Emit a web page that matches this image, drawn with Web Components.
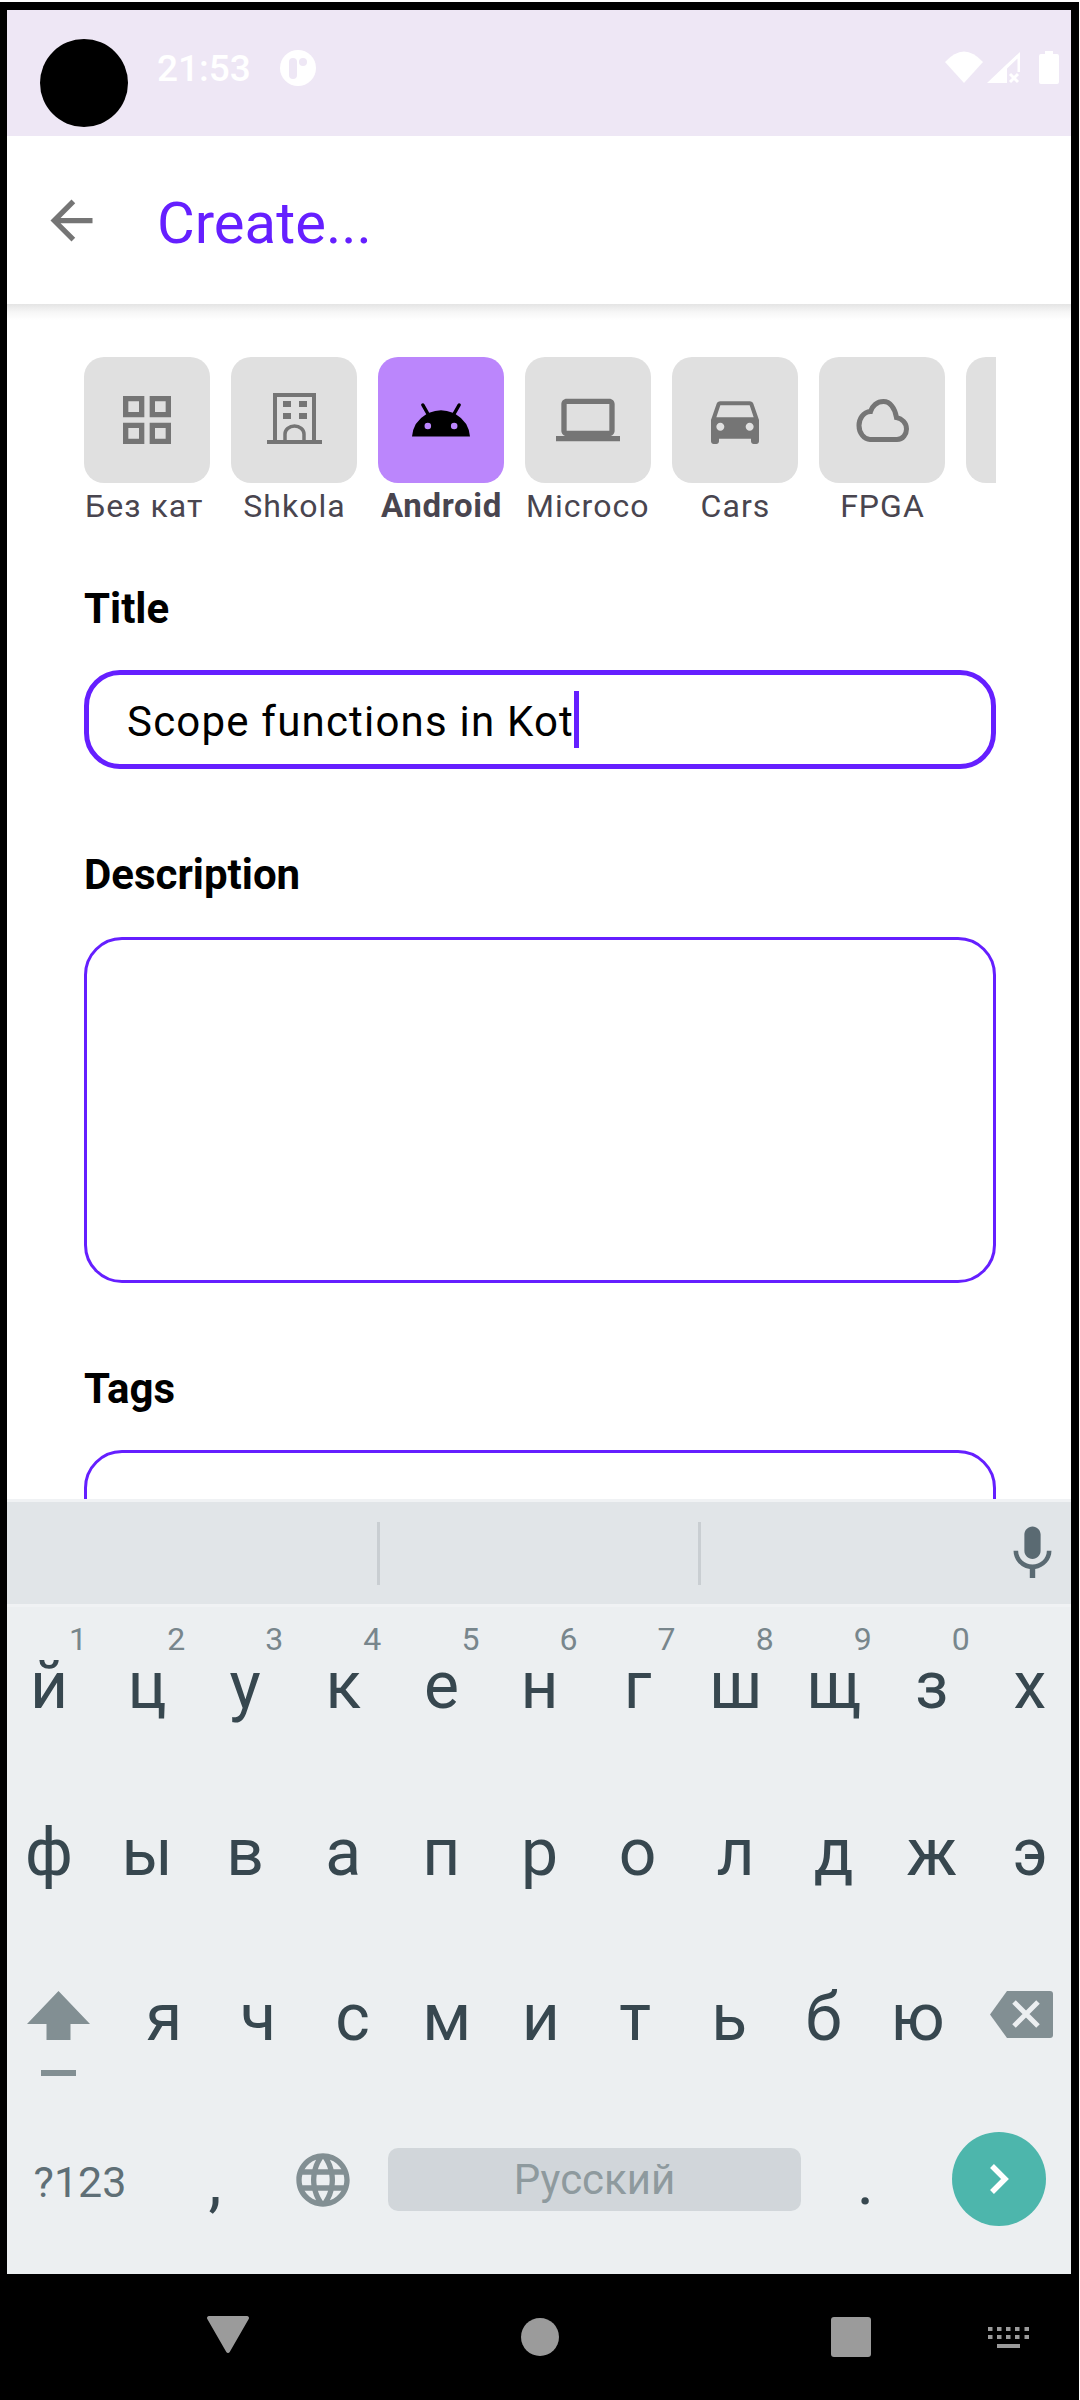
<!DOCTYPE html>
<html>
<head>
<meta charset="utf-8">
<title>Create</title>
<style>
    html,body{margin:0;padding:0;background:#fff;}
    body{width:1080px;height:2400px;overflow:hidden;font-family:Roboto,"Liberation Sans",sans-serif;}
    svg{display:block;}
</style>
</head>
<body>

<phone-frame>
    <status-bar time="21:53"></status-bar>
    <app-toolbar title="Create..."></app-toolbar>

    <create-form>
        <category-list>
            <category-chip label="Без кат" clipped>
                <svg width="64" height="64" viewBox="0 0 24 24" fill="#757575"><path d="M3 3v8h8V3H3zm6 6H5V5h4v4zm-6 4v8h8v-8H3zm6 6H5v-4h4v4zm4-16v8h8V3h-8zm6 6h-4V5h4v4zm-6 4v8h8v-8h-8zm6 6h-4v-4h4v4z"/></svg>
            </category-chip>
            <category-chip label="Shkola">
                <svg width="66" height="66" viewBox="0 0 66 66" fill="#757575">
                    <rect x="6" y="53" width="55" height="4"/>
                    <path d="M14 54V8H53V54" fill="none" stroke="#757575" stroke-width="4"/>
                    <rect x="22" y="14" width="8" height="6"/><rect x="38" y="14" width="8" height="6"/>
                    <rect x="22" y="26" width="8" height="6"/><rect x="38" y="26" width="8" height="6"/>
                    <path d="M24 54v-7a9.5 8 0 0 1 19 0v7" fill="none" stroke="#757575" stroke-width="3.5"/>
                </svg>
            </category-chip>
            <category-chip label="Android" selected>
                <svg width="58" height="34" viewBox="1 7.4 22 12.6" fill="#000"><path fill-rule="evenodd" d="M17.6 11.48 19.44 8.3a.63.63 0 0 0-1.09-.63l-1.88 3.24a11.43 11.43 0 0 0-8.94 0L5.65 7.67a.63.63 0 0 0-1.09.63L6.4 11.48A10.81 10.81 0 0 0 1 20h22a10.81 10.81 0 0 0-5.4-8.52zM7 17.25A1.25 1.25 0 1 1 8.25 16 1.25 1.25 0 0 1 7 17.25zm10 0A1.25 1.25 0 1 1 18.25 16 1.25 1.25 0 0 1 17 17.25z"/></svg>
            </category-chip>
            <category-chip label="Microco" clipped>
                <svg width="64" height="64" viewBox="0 0 24 24" fill="#757575"><path d="M20 18c1.1 0 1.99-.9 1.99-2L22 6c0-1.1-.9-2-2-2H4c-1.1 0-2 .9-2 2v10c0 1.1.9 2 2 2H0v2h24v-2h-4zM4 6h16v10H4V6z"/></svg>
            </category-chip>
            <category-chip label="Cars">
                <svg width="64" height="64" viewBox="0 0 24 24" fill="#757575"><path d="M18.92 6.01C18.72 5.42 18.16 5 17.5 5h-11c-.66 0-1.21.42-1.42 1.01L3 12v8c0 .55.45 1 1 1h1c.55 0 1-.45 1-1v-1h12v1c0 .55.45 1 1 1h1c.55 0 1-.45 1-1v-8l-2.08-5.99zM6.5 16c-.83 0-1.5-.67-1.5-1.5S5.67 13 6.5 13s1.5.67 1.5 1.5S7.33 16 6.5 16zm11 0c-.83 0-1.5-.67-1.5-1.5s.67-1.5 1.5-1.5 1.5.67 1.5 1.5-.67 1.5-1.5 1.5zM5 11l1.5-4.5h11L19 11H5z"/></svg>
            </category-chip>
            <category-chip label="FPGA">
                <svg width="64" height="64" viewBox="0 0 64 64" fill="none" stroke="#757575" stroke-width="5"><path d="M20 51.5H47C53 51.5 56.5 46 56.5 41C56.5 35 52 30.5 46.5 29.5C45 20 40 13.5 33.5 13.5C27 13.5 22 18 20.5 23.5C13 24 9 31 9 37.5C9 45 14 51.5 20 51.5Z"/></svg>
            </category-chip>
            <category-chip label=""></category-chip>
        </category-list>

        <form-field label="Title" gap="36" focused>Scope functions in Kot</form-field>
        <form-field label="Description" gap="37" box="346"></form-field>
        <form-field label="Tags" gap="36" box="120"></form-field>
    </create-form>

    <ime-keyboard>
        <kb-row style="--pad:41px">
            <kb-key hint="1">й</kb-key><kb-key hint="2">ц</kb-key><kb-key hint="3">у</kb-key><kb-key hint="4">к</kb-key><kb-key hint="5">е</kb-key><kb-key hint="6">н</kb-key><kb-key hint="7">г</kb-key><kb-key hint="8">ш</kb-key><kb-key hint="9">щ</kb-key><kb-key hint="0">з</kb-key><kb-key>х</kb-key>
        </kb-row>
        <kb-row style="--pad:41px">
            <kb-key>ф</kb-key><kb-key>ы</kb-key><kb-key>в</kb-key><kb-key>а</kb-key><kb-key>п</kb-key><kb-key>р</kb-key><kb-key>о</kb-key><kb-key>л</kb-key><kb-key>д</kb-key><kb-key>ж</kb-key><kb-key>э</kb-key>
        </kb-row>
        <kb-row style="--pad:39px;--cols:117px repeat(9,94.2px) 1fr">
            <kb-key type="icon">
                <svg width="63" height="85" viewBox="0 0 63 85" fill="#828F93">
                    <path d="M31.5 0 63 33H43.5V49H19.5V33H0Z"/>
                    <rect x="14" y="79" width="35" height="6"/>
                </svg>
            </kb-key>
            <kb-key>я</kb-key><kb-key>ч</kb-key><kb-key>с</kb-key><kb-key>м</kb-key><kb-key>и</kb-key><kb-key>т</kb-key><kb-key>ь</kb-key><kb-key>б</kb-key><kb-key>ю</kb-key>
            <kb-key type="icon">
                <svg width="63" height="47" viewBox="0 0 63 47">
                    <path d="M17 0H60a3 3 0 0 1 3 3V44a3 3 0 0 1-3 3H17L0 23.5Z" fill="#828F93"/>
                    <path d="M24 11 48 35M48 11 24 35" stroke="#ECEFF1" stroke-width="5" fill="none"/>
                </svg>
            </kb-key>
        </kb-row>
        <kb-row style="--cols:160px 110px 106px 437px 105px 162px">
            <kb-key type="label">?123</kb-key>
            <kb-key type="punct">,</kb-key>
            <kb-key type="center">
                <svg width="64" height="64" viewBox="0 0 24 24" fill="#828F93"><path d="M11.99 2C6.47 2 2 6.48 2 12s4.47 10 9.99 10C17.52 22 22 17.52 22 12S17.52 2 11.99 2zm6.93 6h-2.95c-.32-1.25-.78-2.45-1.38-3.56 1.84.63 3.37 1.91 4.33 3.56zM12 4.04c.83 1.2 1.48 2.53 1.91 3.96h-3.82c.43-1.43 1.08-2.76 1.91-3.96zM4.26 14C4.1 13.36 4 12.69 4 12s.1-1.36.26-2h3.38c-.08.66-.14 1.32-.14 2 0 .68.06 1.34.14 2H4.26zm.82 2h2.95c.32 1.25.78 2.45 1.38 3.56-1.84-.63-3.37-1.9-4.33-3.56zm2.95-8H5.08c.96-1.66 2.49-2.93 4.33-3.56C8.81 5.55 8.35 6.75 8.03 8zM12 19.96c-.83-1.2-1.48-2.53-1.91-3.96h3.82c-.43 1.43-1.08 2.76-1.91 3.96zM14.34 14H9.66c-.09-.66-.16-1.32-.16-2 0-.68.07-1.35.16-2h4.68c.09.65.16 1.32.16 2 0 .68-.07 1.34-.16 2zm.25 5.56c.6-1.11 1.06-2.31 1.38-3.56h2.95c-.96 1.65-2.49 2.93-4.33 3.56zM16.36 14c.08-.66.14-1.32.14-2 0-.68-.06-1.34-.14-2h3.38c.16.64.26 1.31.26 2s-.1 1.36-.26 2h-3.38z"/></svg>
            </kb-key>
            <kb-key type="space">Русский</kb-key>
            <kb-key type="punct">.</kb-key>
            <kb-key type="enter">
                <svg width="94" height="94" viewBox="0 0 94 94"><circle cx="47" cy="47" r="47" fill="#4DB6AC"/><path d="M40 34 53 47 40 60" fill="none" stroke="#fff" stroke-width="5.5"/></svg>
            </kb-key>
        </kb-row>
    </ime-keyboard>

    <nav-bar></nav-bar>
</phone-frame>

<script>
const phone_frame = document.createElement('template');
phone_frame.innerHTML = `
    <style>
        :host{display:flex;flex-direction:column;box-sizing:border-box;height:2398px;margin:2px 1px 0 0;padding:8px 8px 0 7px;background:#000;overflow:hidden;}
    </style>
    <slot></slot>
`;

class PhoneFrame extends HTMLElement {
    constructor() {
        super();
        this.attachShadow({ mode: 'open' });
        this.shadowRoot.appendChild(phone_frame.content.cloneNode(true));
    }
}

class StatusBar extends HTMLElement {
    constructor() {
        super();
        this.attachShadow({ mode: 'open' });
        this.shadowRoot.innerHTML = `
            <style>
                :host{display:flex;position:relative;box-sizing:border-box;flex:none;height:126px;padding:40px 12px 0 150px;background:#EEE7F5;color:#fff;}
                .camera{position:absolute;left:33px;top:29px;width:88px;height:88px;border-radius:50%;background:#000;}
                .time{font:500 37px/38px Roboto,sans-serif;height:36px;}
                svg{display:block;}
                .dnd{margin-left:29px;}
                .right{margin-left:auto;}
            </style>
            <div class="camera"></div>
            <span class="time">${this.getAttribute('time')}</span>
            <svg class="dnd" width="36" height="36" viewBox="0 0 36 36">
                <circle cx="18" cy="18" r="18" fill="#fff"/>
                <rect x="9" y="8" width="8" height="21" rx="4" fill="#EEE7F5"/>
                <circle cx="23" cy="12" r="4" fill="#EEE7F5"/>
            </svg>
            <svg class="right" width="114" height="36" viewBox="0 0 114 36" fill="#fff">
                <path d="M0 12Q19-9 38 12L19 33Z"/>
                <path d="M42 33H62V14Z"/>
                <path d="M62 14 75 2V22H72.5V8.5L62 18.5Z"/>
                <path d="M65 24 73 32M73 24 65 32" stroke="#fff" stroke-width="3"/>
                <path d="M100 4V1H108V4H112a2 2 0 0 1 2 2V32a2 2 0 0 1-2 2H96a2 2 0 0 1-2-2V6a2 2 0 0 1 2-2Z"/>
            </svg>
        `;
    }
}

class AppToolbar extends HTMLElement {
    constructor() {
        super();
        this.attachShadow({ mode: 'open' });
        this.shadowRoot.innerHTML = `
            <style>
                :host{display:flex;align-items:center;gap:54px;position:relative;z-index:2;box-sizing:border-box;flex:none;height:168px;padding:0 0 0 33px;background:#fff;}
                :host::after{content:"";position:absolute;left:0;right:0;top:100%;height:16px;background:linear-gradient(#E4E4E4,#F6F6F6 50%,#fff);}
                svg{display:block;}
                .title{padding-top:5px;font:400 58px/70px Roboto,sans-serif;color:#651FFF;}
            </style>
            <svg width="63" height="63" viewBox="0 0 24 24" fill="#757575"><path d="M20 11H7.83l5.59-5.59L12 4l-8 8 8 8 1.41-1.41L7.83 13H20v-2z"/></svg>
            <span class="title">${this.getAttribute('title')}</span>
        `;
    }
}

class CreateForm extends HTMLElement {
    constructor() {
        super();
        this.attachShadow({ mode: 'open' });
        this.shadowRoot.innerHTML = `
            <style>
                :host{display:flex;flex-direction:column;gap:81px;box-sizing:border-box;flex:1;min-height:0;padding:53px 75px 0 77px;background:#fff;overflow:hidden;}
            </style>
            <slot></slot>
        `;
    }
}

class CategoryList extends HTMLElement {
    constructor() {
        super();
        this.attachShadow({ mode: 'open' });
        this.shadowRoot.innerHTML = `
            <style>
                :host{display:flex;gap:21px;margin-bottom:-25px;overflow:hidden;flex:none;}
            </style>
            <slot></slot>
        `;
    }
}

class CategoryChip extends HTMLElement {
    constructor() {
        super();
        this.attachShadow({ mode: 'open' });
        this.shadowRoot.innerHTML = `
            <style>
                :host{display:flex;flex-direction:column;flex:none;width:126px;}
                .tile{display:flex;align-items:center;justify-content:center;width:126px;height:126px;border-radius:20px;background:#E0E0E0;}
                :host([selected]) .tile{background:#BB86FC;}
                .name{margin-top:1px;height:44px;padding-left:1px;font:400 32px/44px Roboto,sans-serif;letter-spacing:1.05px;color:#49454F;text-align:center;white-space:nowrap;overflow:hidden;}
                :host([clipped]) .name{text-align:left;}
                :host([selected]) .name{font-weight:700;font-size:33px;letter-spacing:.7px;}
            </style>
            <div class="tile"><slot></slot></div>
            <div class="name">${this.getAttribute('label')}</div>
        `;
    }
}

class FormField extends HTMLElement {
    constructor() {
        super();
        this.attachShadow({ mode: 'open' });
        const boxHeight = this.getAttribute('box') || 99;
        this.shadowRoot.innerHTML = `
            <style>
                :host{display:block;flex:none;}
                .label{height:50px;margin-bottom:${this.getAttribute('gap')}px;font:700 42px/50px Roboto,sans-serif;color:#000;}
                .box{display:flex;align-items:center;box-sizing:border-box;height:${boxHeight}px;padding:0 0 0 38px;border:3px solid #651FFF;border-radius:38px;background:#fff;font:400 42px/60px Roboto,sans-serif;letter-spacing:1.2px;color:#000;}
                :host([focused]) .box{border-width:5px;border-radius:36px;}
                .text{padding-top:4px;}
                .caret{display:none;width:5px;height:57px;background:#651FFF;}
                :host([focused]) .caret{display:block;}
            </style>
            <div class="label">${this.getAttribute('label')}</div>
            <div class="box"><span class="text"><slot></slot></span><span class="caret"></span></div>
        `;
    }
}

class ImeKeyboard extends HTMLElement {
    constructor() {
        super();
        this.attachShadow({ mode: 'open' });
        this.shadowRoot.innerHTML = `
            <style>
                :host{display:block;flex:none;background:#ECEFF1;border-top:3px solid #F0F2F4;overflow:hidden;}
                .bar{display:flex;align-items:center;box-sizing:border-box;height:102px;padding:0 6.5px 0 370px;background:#E1E5E8;}
                .bar i{display:block;width:3px;height:63px;background:#C9CED2;}
                .bar i + i{margin-left:318px;}
                .bar svg{display:block;margin-left:auto;}
                .line{height:3px;background:#F0F2F4;}
                .rows{display:flex;flex-direction:column;height:667px;margin:0 -8px 0 -7px;}
            </style>
            <div class="bar">
                <i></i><i></i>
                <svg width="65" height="65" viewBox="0 0 24 24" fill="#5A6A72"><path d="M12 14c1.66 0 2.99-1.34 2.99-3L15 5c0-1.66-1.34-3-3-3S9 3.34 9 5v6c0 1.66 1.34 3 3 3zm5.3-3c0 3-2.54 5.1-5.3 5.1S6.7 14 6.7 11H5c0 3.41 2.72 6.23 6 6.72V21h2v-3.28c3.28-.48 6-3.3 6-6.72h-1.7z"/></svg>
            </div>
            <div class="line"></div>
            <div class="rows"><slot></slot></div>
        `;
    }
}

class KbRow extends HTMLElement {
    constructor() {
        super();
        this.attachShadow({ mode: 'open' });
        this.shadowRoot.innerHTML = `
            <style>
                :host{display:grid;grid-template-columns:var(--cols,repeat(11,1fr));flex:1;min-height:0;}
            </style>
            <slot></slot>
        `;
    }
}

class KbKey extends HTMLElement {
    constructor() {
        super();
        this.attachShadow({ mode: 'open' });
        const hint = this.getAttribute('hint');
        this.shadowRoot.innerHTML = `
            <style>
                :host{display:flex;position:relative;justify-content:center;align-items:flex-start;box-sizing:border-box;padding-top:var(--pad,41px);font:400 66px/76px Roboto,sans-serif;color:#37474F;}
                .hint{position:absolute;left:50%;top:10px;margin-left:20px;font:400 32px/44px Roboto,sans-serif;color:#78868C;}
                :host([type=icon]){padding-top:50px;}
                :host([type=label]){padding-top:50px;font-size:43px;line-height:50px;color:#5F6F76;}
                :host([type=punct]){padding-top:37px;}
                :host([type=center]){padding-top:41px;}
                :host([type=enter]){padding-top:25px;}
                :host([type=space]){align-self:start;height:63px;margin:41px 12px 0;padding:0;align-items:center;border-radius:10px;background:#D1D6DA;font-size:42px;line-height:50px;color:#8E9A9E;}
            </style>
            ${hint ? `<span class="hint">${hint}</span>` : ''}
            <slot></slot>
        `;
    }
}

class NavBar extends HTMLElement {
    constructor() {
        super();
        this.attachShadow({ mode: 'open' });
        this.shadowRoot.innerHTML = `
            <style>
                :host{display:flex;align-items:center;box-sizing:border-box;flex:none;height:126px;padding:0 0 0 200px;background:#000;}
                svg{display:block;}
                .back{margin-top:-5px;}
                .home{margin-left:272px;}
                .recent{margin-left:272px;}
                .keys{margin-left:117px;}
            </style>
            <svg class="back" width="42" height="37" viewBox="0 0 42 37"><path d="M2 0H40a2 2 0 0 1 1.7 3L22.7 36a2 2 0 0 1-3.4 0L.3 3A2 2 0 0 1 2 0Z" fill="#9B9B9B"/></svg>
            <svg class="home" width="38" height="38" viewBox="0 0 38 38"><circle cx="19" cy="19" r="19" fill="#9B9B9B"/></svg>
            <svg class="recent" width="40" height="40" viewBox="0 0 40 40"><rect width="40" height="40" rx="3" fill="#9B9B9B"/></svg>
            <svg class="keys" width="41" height="21" viewBox="0 0 41 21" fill="#9B9B9B">
                <path d="M0 0h4.500v4H0zM9 0h4.500v4H9zM18 0h4.500v4H18zM27 0h4.500v4H27zM36.500 0H41v4H36.500zM0 8h4.500v4H0zM9 8h4.500v4H9zM18 8h4.500v4H18zM27 8h4.500v4H27zM36.500 8H41v4H36.500zM9 17h23v4H9z"/>
            </svg>
        `;
    }
}

window.customElements.define('phone-frame', PhoneFrame);
window.customElements.define('status-bar', StatusBar);
window.customElements.define('app-toolbar', AppToolbar);
window.customElements.define('create-form', CreateForm);
window.customElements.define('category-list', CategoryList);
window.customElements.define('category-chip', CategoryChip);
window.customElements.define('form-field', FormField);
window.customElements.define('ime-keyboard', ImeKeyboard);
window.customElements.define('kb-row', KbRow);
window.customElements.define('kb-key', KbKey);
window.customElements.define('nav-bar', NavBar);
</script>
</body>
</html>
